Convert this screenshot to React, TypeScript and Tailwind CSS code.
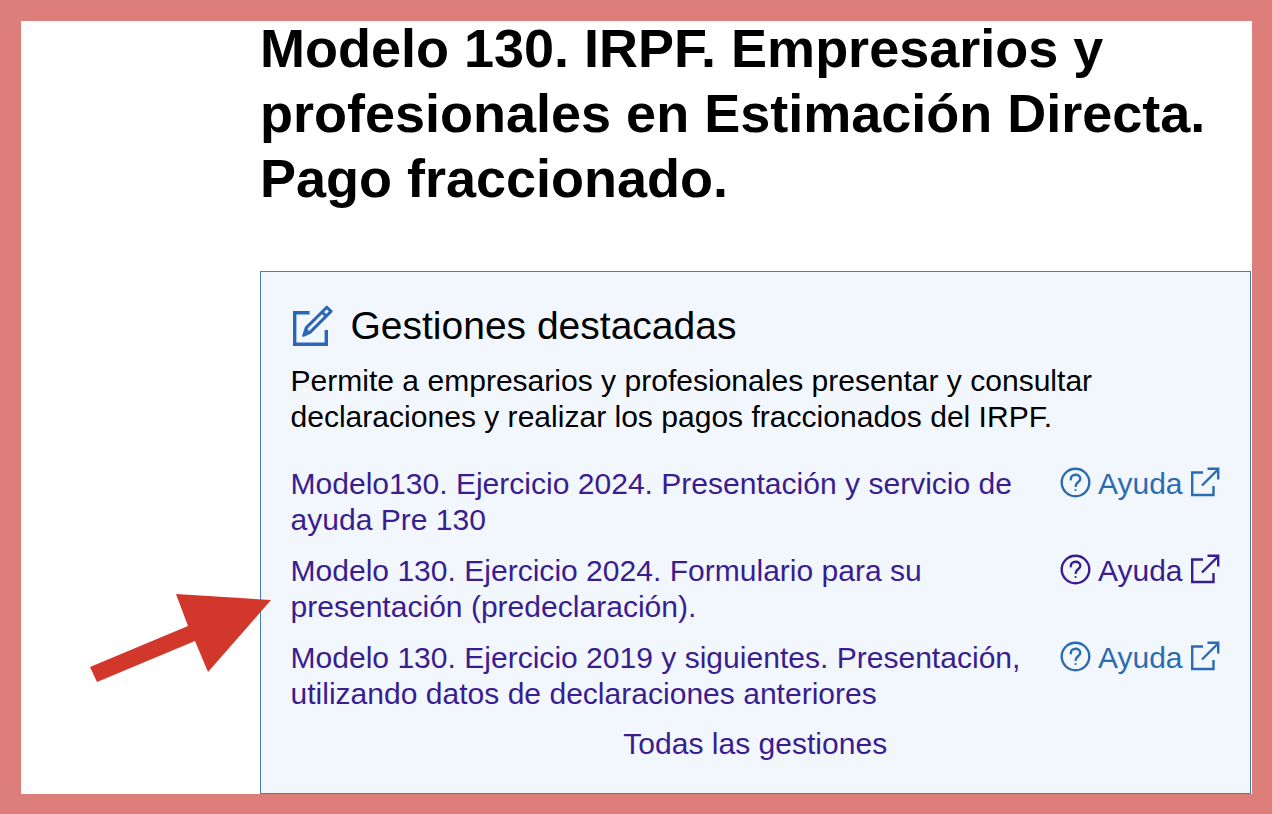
import type { ReactNode } from 'react'

const rows = [
  { text: 'Modelo130. Ejercicio 2024. Presentación y servicio de ayuda Pre 130', help: 'text-[#2b6cb0]' },
  { text: 'Modelo 130. Ejercicio 2024. Formulario para su presentación (predeclaración).', help: 'text-[#3a1d8f]' },
  { text: 'Modelo 130. Ejercicio 2019 y siguientes. Presentación, utilizando datos de declaraciones anteriores', help: 'text-[#2b6cb0]' },
]

function HelpIcon() {
  return (
    <svg width="31" height="31" viewBox="0 0 31 31" fill="none" stroke="currentColor" strokeWidth="2.4" className="-mt-[2px] shrink-0">
      <circle cx="15.5" cy="15.5" r="13.8" />
      <path d="M10.8 12.2c0-2.8 2.1-4.5 4.8-4.5s4.7 1.6 4.7 4c0 3.6-4.6 3.4-4.6 7.2" strokeLinecap="round" />
      <circle cx="15.6" cy="23" r="1.1" fill="currentColor" stroke="none" />
    </svg>
  )
}

function ExternalIcon() {
  return (
    <svg width="30" height="30" viewBox="0 0 30 30" fill="none" stroke="currentColor" strokeWidth="2.4" className="-mt-[4px] shrink-0">
      <path d="M13 5.5H2.2v22.5h21.3V19" />
      <path d="M12 18.5L28 2.5M17.5 1.8h10.7v10.7" />
    </svg>
  )
}

function HelpLink({ color }: { color: string }): ReactNode {
  return (
    <div className={`flex w-[160px] shrink-0 items-center self-start ${color}`}>
      <HelpIcon />
      <span className="mx-[7px] text-[30px]">Ayuda</span>
      <ExternalIcon />
    </div>
  )
}

export default function App() {
  return (
    <div className="relative h-[814px] w-[1272px] overflow-hidden border-b-[20px] border-l-[21px] border-r-[20px] border-t-[21px] border-[#dd7e7b] bg-white font-['Liberation_Sans',Arial,sans-serif]">
      <div className="ml-[239px] mr-px flex h-full flex-col">
        <h1 className="-mt-[5px] h-[255px] shrink-0 text-[54px] font-bold leading-[65px] text-black">
          Modelo 130. IRPF. Empresarios y
          <br />
          profesionales en Estimación Directa.
          <br />
          Pago fraccionado.
        </h1>

        <div className="flex-1 border border-[#4a7db8] bg-[#f2f7fe] pl-[29.5px] pr-[30px] pt-[33px] text-[30.05px] leading-[36px]">
          <div className="flex items-center gap-[17.5px]">
            <svg width="42" height="42" viewBox="0 0 42 42" fill="none" className="ml-[0.5px] shrink-0 text-[#2a67b5]">
              <path d="M18.5 7.7H3.7V39.3H35.3V25" stroke="currentColor" strokeWidth="3.4" />
              <path d="M35.8 2.2L40 6.4 19 27.4 12.8 30.2 15.4 22.6z" stroke="currentColor" strokeWidth="3" strokeLinejoin="round" />
              <path d="M31 7l4.5 4.5" stroke="currentColor" strokeWidth="3" />
              <path d="M15.4 22.6L19 27.4 11 32z" fill="currentColor" />
            </svg>
            <h2 className="text-[39px] leading-[42px] text-black">Gestiones destacadas</h2>
          </div>

          <p className="mt-[16px] text-black">
            Permite a empresarios y profesionales presentar y consultar
            <br />
            declaraciones y realizar los pagos fraccionados del IRPF.
          </p>

          <div className="mt-[31px] flex flex-col gap-[16px] leading-[35.5px]">
            {rows.map((row) => (
              <div key={row.text} className="flex justify-between">
                <a className="w-[735px] text-[#3a1d8f]">{row.text}</a>
                <HelpLink color={row.help} />
              </div>
            ))}
          </div>

          <div className="mt-[15px] text-center text-[#3a1d8f]">Todas las gestiones</div>
        </div>
      </div>

      {/* flecha roja */}
      <svg width="200" height="110" viewBox="0 0 200 110" className="absolute left-[69px] top-[572px]">
        <path d="M0 74L98 33 86 1 181 7 118 79 105 48 7 89z" fill="#d2372b" />
      </svg>
    </div>
  )
}
